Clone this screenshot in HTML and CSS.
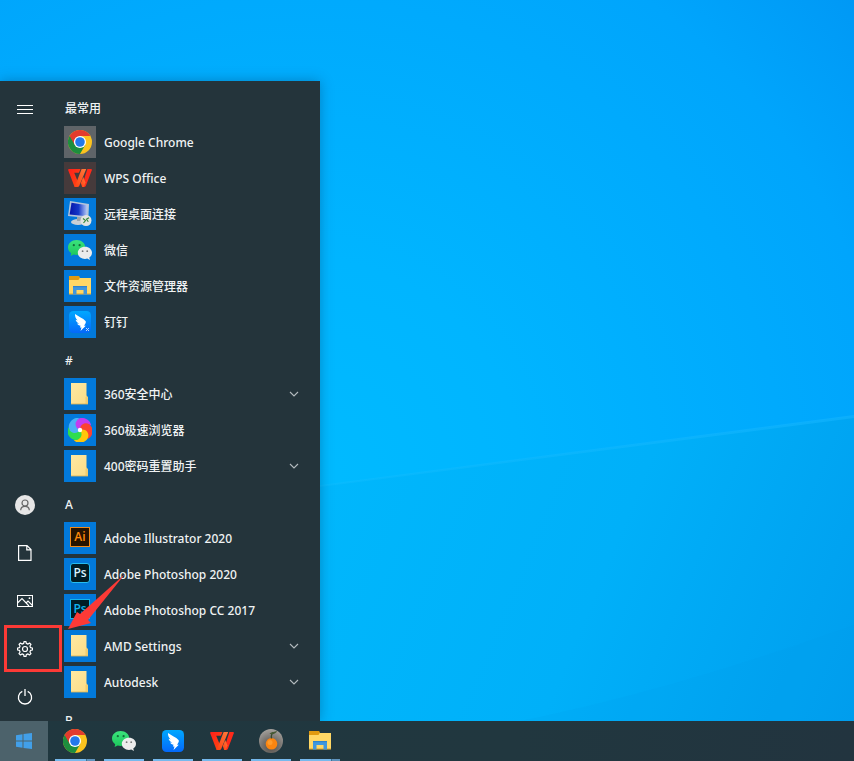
FILE: index.html
```
<!DOCTYPE html>
<html lang="zh-CN">
<head>
<meta charset="utf-8">
<title>开始</title>
<link rel="stylesheet" href="styles.css">
</head>
<body>
<svg class="defs" aria-hidden="true">
  <defs>
    <linearGradient id="fold" x1="0" y1="0" x2="1" y2="1"><stop offset="0" stop-color="#ffe9a2"/><stop offset="1" stop-color="#fbdc85"/></linearGradient>
    <linearGradient id="wpsg" x1="0" y1="0" x2="1" y2="1"><stop offset="0" stop-color="#ff1f1a"/><stop offset="1" stop-color="#ff4a10"/></linearGradient>
    <linearGradient id="wpso" x1="1" y1="0" x2="0" y2="1"><stop offset="0" stop-color="#ff7a3a"/><stop offset="1" stop-color="#ff4012"/></linearGradient>
    <linearGradient id="dingg" x1="0" y1="0" x2="0" y2="1"><stop offset="0" stop-color="#00a8ff"/><stop offset="1" stop-color="#0468fa"/></linearGradient>
    <linearGradient id="screen" x1="0" y1="0" x2="1" y2="0"><stop offset="0" stop-color="#0614a8"/><stop offset=".5" stop-color="#1438c8"/><stop offset="1" stop-color="#b9cdf7"/></linearGradient>
    <linearGradient id="wcg" x1="0" y1="0" x2="0" y2="1"><stop offset="0" stop-color="#3be37c"/><stop offset="1" stop-color="#1cc65c"/></linearGradient>
    <radialGradient id="stone" cx=".5" cy=".75" r=".75"><stop offset="0" stop-color="#55504b"/><stop offset=".5" stop-color="#77736f"/><stop offset="1" stop-color="#a5a19d"/></radialGradient>
  </defs>
  <symbol id="chrome" viewBox="0 0 24 24">
    <circle cx="12" cy="12" r="12" fill="#fcc31e"/>
    <path d="M12 12 1.6 6A12 12 0 0 0 12 24l5.2-9z" fill="#1e8e3e"/>
    <path d="M12 6h10.4A12 12 0 0 0 1.6 6l5.2 9z" fill="#e33b2e"/>
    <circle cx="12" cy="12" r="6.1" fill="#fff"/>
    <circle cx="12" cy="12" r="4.8" fill="#2478ea"/>
  </symbol>
  <symbol id="wps" viewBox="0 0 24 20">
    <path d="M1 1h11.500l-1.600 3.800H6.200L10 14l-1.600 5H6.600L.2 2.200Q0 1 1 1z" fill="url(#wpsg)"/>
    <path d="M13.600 1h4.600L11.400 17.500Q10.700 19 9.400 19H6.600z" fill="url(#wpso)"/>
    <path d="M19.400 1H23q1.200 0 .8 1.200L18 17.500q-.6 1.500-2 1.500h-1.400l-.4-2z" fill="#ff2a1a"/>
    <path d="m15.200 9 2.300 5.500-1.600 4.500h-1.700l-1.400-4z" fill="url(#wpso)"/>
  </symbol>
  <symbol id="remote" viewBox="0 0 24 26">
    <ellipse cx="10" cy="21" rx="7" ry="3" fill="#c9cfd4"/>
    <path d="M9 16h6v4H9z" fill="#9aa5ad"/>
    <path d="m2 0 19 3-.6 14L0 15z" fill="#b4c4da"/>
    <path d="m3.500 1.800 15.800 2.500-.6 11L1.600 13.500z" fill="url(#screen)"/>
    <circle cx="18" cy="19.500" r="5.500" fill="#e2e4e0"/>
    <path d="m15 17.500 2.500 2-2 2.500M21 16.800l-2.500 1.400 1.800 2.600" fill="none" stroke="#31853a" stroke-width="1.100"/>
  </symbol>
  <symbol id="wechat" viewBox="0 0 24 20">
    <path d="M8.600 0C3.700 0 0 3.300 0 7.500c0 2.400 1.200 4.300 3.200 5.700L2.600 16l3.100-1.500c1 .3 1.900.4 2.900.4 4.900 0 8.700-3.200 8.700-7.400S13.500 0 8.600 0z" fill="url(#wcg)"/>
    <circle cx="5.800" cy="5.200" r="1.100" fill="#126c3a"/><circle cx="11.600" cy="5.200" r="1.100" fill="#126c3a"/>
    <path d="M17 6.700c-4.100 0-7.200 2.700-7.200 6.100s3.100 6.100 7.200 6.100c.8 0 1.600-.1 2.300-.3l2.600 1.300-.6-2.300c1.700-1.200 2.700-2.900 2.700-4.800 0-3.400-3-6.100-7-6.100z" fill="#ececec"/>
    <circle cx="14.600" cy="11.200" r=".9" fill="#777"/><circle cx="19.200" cy="11.200" r=".9" fill="#777"/>
  </symbol>
  <symbol id="explorer" viewBox="0 0 22 20">
    <path d="M0 2h22v16H0z" fill="#ffd765"/>
    <path d="M0 0h10l1 1.500L9.500 4H0z" fill="#e09a10"/>
    <path d="M0 17h22v1.500H0z" fill="#f0bd45"/>
    <path d="M4 10.500h14v8h-3.500V14h-7v4.500H4z" fill="#3f97de"/>
    <path d="M4 10h14v1.200H4z" fill="#2e83cc"/>
  </symbol>
  <symbol id="ding" viewBox="0 0 22 22">
    <rect width="22" height="22" rx="4.500" fill="url(#dingg)"/>
    <path d="M6 3c3.500 2.500 8 4.300 10.500 7 .7.800.3 1.900-.2 2.800l-1.200 2h1.700L11.500 20l1-3.600h-1.700l.8-1.700c-1.600-.2-3-.9-3.600-2.200l2.300.2C8.500 11.700 7 10.500 6.600 8.700l2 .7C6.800 7.700 5.800 5.500 6 3z" fill="#fff"/>
  </symbol>
  <symbol id="folder" viewBox="0 0 18 22">
    <path d="M0 0h15.500v12.500l1.500 2V21H0z" fill="url(#fold)"/>
    <path d="M15.500 12.500 17 14.500V21h-2.500v-6.500z" fill="#f0cc70"/>
    <path d="M0 20.500h17v.9H0z" fill="#e0b95c"/>
  </symbol>
  <symbol id="swirl" viewBox="-12 -12 24 24">
    <path d="M0 0C-7-2-6-11 1-12 7-12.500 11-8 11-4.500 8-7 1-6 0 0z" fill="#c43cf0"/>
    <path d="M0 0C-7-2-6-11 1-12 7-12.500 11-8 11-4.500 8-7 1-6 0 0z" fill="#fa4233" transform="rotate(72)"/>
    <path d="M0 0C-7-2-6-11 1-12 7-12.500 11-8 11-4.500 8-7 1-6 0 0z" fill="#ffc60a" transform="rotate(144)"/>
    <path d="M0 0C-7-2-6-11 1-12 7-12.500 11-8 11-4.500 8-7 1-6 0 0z" fill="#2fdd4d" transform="rotate(216)"/>
    <path d="M0 0C-7-2-6-11 1-12 7-12.500 11-8 11-4.500 8-7 1-6 0 0z" fill="#4cb0f5" transform="rotate(288)"/>
    <path d="M0 0C-3-1-5-4-4.300-7.500-2-12 2-12.200 4-11.400-1-9-2-4 0 0z" fill="#c43cf0"/>
    <circle r="2.200" fill="#fff"/>
  </symbol>
  <symbol id="chev" viewBox="0 0 10 6"><path d="m1 1 4 4 4-4" fill="none" stroke="#b4bbbf" stroke-width="1.100"/></symbol>
</svg>

<main class="desktop">
  <svg class="wallpaper" viewBox="0 0 854 721" preserveAspectRatio="none" aria-hidden="true">
    <defs>
      <radialGradient id="sky" gradientUnits="userSpaceOnUse" cx="300" cy="480" r="740"><stop offset="0" stop-color="#00bbff"/><stop offset=".3" stop-color="#00b5ff"/><stop offset=".65" stop-color="#00aafd"/><stop offset=".8" stop-color="#00a5fc"/><stop offset="1" stop-color="#0098f5"/></radialGradient>
      <linearGradient id="ground" gradientUnits="userSpaceOnUse" x1="320" y1="500" x2="854" y2="721"><stop offset="0" stop-color="#00b7fc"/><stop offset=".5" stop-color="#00b0f9"/><stop offset="1" stop-color="#009eee"/></linearGradient>
      <linearGradient id="beam" x1="0" y1="0" x2="1" y2="0"><stop offset="0" stop-color="#1cc0ff" stop-opacity=".25"/><stop offset="1" stop-color="#14b4ff" stop-opacity=".6"/></linearGradient>
    </defs>
    <path d="M0 0h854v721H0z" fill="url(#sky)"/>
    <path d="M0 528 320 486 854 416V721H0z" fill="url(#ground)"/>
    <path d="M320 485 854 415v3L320 487z" fill="url(#beam)"/>
    <path d="M520 721C650 695 770 655 854 625v96z" fill="#0098e6" fill-opacity=".13"/>
  </svg>

  <section class="start" aria-label="开始菜单">
    <nav class="rail" aria-label="系统">
      <button class="rail-btn menu" aria-label="展开"><svg width="16" height="10" viewBox="0 0 16 10"><path d="M0 .5h16M0 4.500h16M0 8.500h16" stroke="#fff"/></svg></button>
      <button class="rail-btn" aria-label="用户"><svg width="20" height="20" viewBox="0 0 20 20"><circle cx="10" cy="10" r="10" fill="#e6e6e6"/><g fill="none" stroke="#666" stroke-width="1.200"><circle cx="10" cy="8" r="3"/><path d="M5.700 15.300c.2-5.200 8.400-5.200 8.600 0"/></g></svg></button>
      <button class="rail-btn" aria-label="文档"><svg width="14" height="16" viewBox="0 0 14 16"><path d="M.6.600H9L13 4.600V15.400H.6zM8.800.600v4.200H13" fill="none" stroke="#fff" stroke-width="1.200"/></svg></button>
      <button class="rail-btn" aria-label="图片"><svg width="16" height="12" viewBox="0 0 16 12"><g fill="none" stroke="#fff" stroke-width="1.100"><path d="M.5.500h15v11H.5zM.5 8 5 3.500l7 7.500M9 8l2-2 4.500 4.500"/></g><circle cx="12.500" cy="3.200" r=".9" fill="#fff"/></svg></button>
      <button class="rail-btn settings" aria-label="设置"><svg width="16" height="16" viewBox="0 0 16 16"><g fill="none" stroke="#fff" stroke-width="1.200" stroke-linejoin="round"><path d="M6.700 2.400 7 .6h2l.3 1.800 1.700.7 1.500-1.100 1.500 1.500-1.100 1.500.7 1.700 1.800.3v2l-1.800.3-.7 1.700 1.100 1.500-1.500 1.500-1.500-1.100-1.700.7L9 15.400H7l-.3-1.800-1.700-.7L3.500 14 2 12.500 3.100 11l-.7-1.700L.6 9V7l1.800-.3L3.100 5 2 3.500 3.500 2 5 3.100z"/><circle cx="8" cy="8" r="2.500"/></g></svg></button>
      <button class="rail-btn" aria-label="电源"><svg width="16" height="16" viewBox="0 0 16 16"><path d="M5.300 2.400a6.600 6.600 0 1 0 5.400 0M8 0v7" fill="none" stroke="#fff" stroke-width="1.300"/></svg></button>
    </nav>

    <div class="apps">
      <h2>最常用</h2>
      <a class="app" href="#"><span class="tile grey"><svg width="24" height="24"><use href="#chrome"/></svg></span><span class="name">Google Chrome</span></a>
      <a class="app" href="#"><span class="tile brown"><svg width="24" height="20"><use href="#wps"/></svg></span><span class="name">WPS Office</span></a>
      <a class="app" href="#"><span class="tile"><svg width="24" height="26"><use href="#remote"/></svg></span><span class="name">远程桌面连接</span></a>
      <a class="app" href="#"><span class="tile"><svg width="24" height="20"><use href="#wechat"/></svg></span><span class="name">微信</span></a>
      <a class="app" href="#"><span class="tile"><svg width="22" height="20"><use href="#explorer"/></svg></span><span class="name">文件资源管理器</span></a>
      <a class="app" href="#"><span class="tile"><svg width="22" height="22" viewBox="0 0 22 22"><use href="#ding"/><path d="m17 17 3 3m0-3-3 3" stroke="#b9d6ff"/></svg></span><span class="name">钉钉</span></a>
      <h2>#</h2>
      <button class="app"><span class="tile"><svg width="18" height="22"><use href="#folder"/></svg></span><span class="name">360安全中心</span><svg class="chev" width="10" height="6"><use href="#chev"/></svg></button>
      <a class="app" href="#"><span class="tile"><svg width="24" height="24"><use href="#swirl"/></svg></span><span class="name">360极速浏览器</span></a>
      <button class="app"><span class="tile"><svg width="18" height="22"><use href="#folder"/></svg></span><span class="name">400密码重置助手</span><svg class="chev" width="10" height="6"><use href="#chev"/></svg></button>
      <h2>A</h2>
      <a class="app" href="#"><span class="tile"><svg width="22" height="24" viewBox="0 0 22 24"><rect x="1.500" y="1.500" width="19" height="19" fill="#261300" stroke="#f08a1c"/><text class="mark" x="11" y="15" fill="#ff8a0a">Ai</text></svg></span><span class="name">Adobe Illustrator 2020</span></a>
      <a class="app" href="#"><span class="tile"><svg width="22" height="24" viewBox="0 0 22 24"><rect x="1.500" y="1.500" width="19" height="19" rx="2.500" fill="#001d26" stroke="#25bdf2"/><text class="mark" x="11" y="15" fill="#d8f3ff">Ps</text></svg></span><span class="name">Adobe Photoshop 2020</span></a>
      <a class="app" href="#"><span class="tile"><svg width="22" height="24" viewBox="0 0 22 24"><rect x="1.500" y="1.500" width="19" height="19" fill="#001d26" stroke="#12b4ee"/><text class="mark" x="11" y="15" fill="#12b4ee">Ps</text></svg></span><span class="name">Adobe Photoshop CC 2017</span></a>
      <button class="app"><span class="tile"><svg width="18" height="22"><use href="#folder"/></svg></span><span class="name">AMD Settings</span><svg class="chev" width="10" height="6"><use href="#chev"/></svg></button>
      <button class="app"><span class="tile"><svg width="18" height="22"><use href="#folder"/></svg></span><span class="name">Autodesk</span><svg class="chev" width="10" height="6"><use href="#chev"/></svg></button>
      <h2>B</h2>
    </div>
    <svg class="arrow" width="58" height="56" viewBox="0 0 58 56" aria-hidden="true"><path d="M0 55 9 38l3 2L57 0 20 46l3 3z" fill="#fc3a36"/></svg>
  </section>
</main>

<footer class="taskbar">
  <button class="win" aria-label="开始"><svg width="16" height="16" viewBox="0 0 16 16"><path d="M0 2.300 6.500 1.300V7.500H0zM7.500 1.100 16 0v7.500H7.500zM0 8.500h6.500v6.200L0 13.700zM7.500 8.500H16V16l-8.500-1.100z" fill="#429fe8"/></svg></button>
  <div class="tasks">
    <button class="task multi" aria-label="Google Chrome"><svg width="24" height="24"><use href="#chrome"/></svg></button>
    <button class="task" aria-label="微信"><svg width="24" height="20"><use href="#wechat"/></svg></button>
    <button class="task" aria-label="钉钉"><svg width="22" height="22"><use href="#ding"/></svg></button>
    <button class="task" aria-label="WPS Office"><svg width="24" height="20"><use href="#wps"/></svg></button>
    <button class="task" aria-label="橙子"><svg width="24" height="24" viewBox="0 0 24 24"><circle cx="12" cy="12" r="12" fill="url(#stone)"/><circle cx="12.500" cy="14.800" r="5.800" fill="#fb8510"/><circle cx="11" cy="13.500" r="2.500" fill="#ff9b2b"/><path d="M12.500 9.500c-.5-3 .5-5 2-5.500" fill="none" stroke="#39492a" stroke-width="1.300"/><path d="M10.500 5C13 2 16 3.500 18 1.500 17.500 5 14 5.500 10.500 5z" fill="#465a35"/></svg></button>
    <button class="task multi" aria-label="文件资源管理器"><svg width="22" height="20"><use href="#explorer"/></svg></button>
  </div>
</footer>
</body>
</html>
```
FILE: styles.css
```
* { box-sizing: border-box; }

body {
  margin: 0;
  height: 100vh;
  display: flex;
  flex-direction: column;
  overflow: hidden;
  font: 500 12px/16px "Noto Sans", "Noto Sans CJK SC", sans-serif;
  color: #f0f3f4;
}

button {
  border: 0;
  padding: 0;
  background: none;
  font: inherit;
  color: inherit;
}

svg { display: block; flex: none; }

.defs { position: absolute; width: 0; height: 0; }

.desktop {
  position: relative;
  flex: 1;
  min-height: 0;
  display: flex;
  padding-top: 81px;
  background: #00b0fc;
}

.wallpaper {
  position: absolute;
  inset: 0;
  width: 100%;
  height: 100%;
}

.start {
  position: relative;
  width: 320px;
  display: flex;
  background: #24343b;
  box-shadow: 0 0 12px rgba(0, 50, 90, .35);
}

.rail {
  width: 50px;
  display: flex;
  flex-direction: column;
  padding-top: 5px;
}

.rail-btn {
  position: relative;
  height: 48px;
  flex: none;
  display: flex;
  align-items: center;
  justify-content: center;
}

.menu { margin-bottom: auto; }

/* Highlight frame around the settings button */
.settings::after {
  content: "";
  position: absolute;
  inset: 0 -12px 1px 4px;
  border: 3px solid #fc3a36;
}

.apps {
  flex: 1;
  padding: 7px 20px 0 14px;
  overflow: hidden;
}

h2 {
  height: 36px;
  margin: 0;
  padding: 13px 0 0 1px;
  font-size: 12px;
  line-height: 16px;
  font-weight: 500;
}

.app {
  width: 100%;
  height: 36px;
  display: flex;
  align-items: center;
  gap: 8px;
  color: inherit;
  text-align: left;
  text-decoration: none;
  white-space: nowrap;
}

.name { padding-top: 2px; }

.tile {
  width: 32px;
  height: 32px;
  flex: none;
  display: flex;
  align-items: center;
  justify-content: center;
  background: #0279da;
}

.grey { background: #5f6468; }
.brown { background: #463a3b; }

.chev { margin-left: auto; margin-right: 1px; }

.mark {
  font: 600 12px "Open Sans", sans-serif;
  text-anchor: middle;
}

.arrow {
  position: absolute;
  left: 68px;
  bottom: 91px;
}

.taskbar {
  position: relative;
  height: 40px;
  display: flex;
  gap: 7px;
  background: linear-gradient(90deg, #20373f, #21373f 60%, #22343f);
}

.win {
  width: 48px;
  display: flex;
  align-items: center;
  justify-content: center;
  background: #4c626b;
}

.tasks { display: flex; gap: 9px; }

.task {
  width: 40px;
  display: flex;
  align-items: center;
  justify-content: center;
  background: linear-gradient(#76b9ed, #76b9ed) bottom / 100% 2px no-repeat;
}

.multi {
  background-image: linear-gradient(90deg, #76b9ed 31px, #41718f 31px, #41718f 32px, #5f93bd 32px);
}
```
